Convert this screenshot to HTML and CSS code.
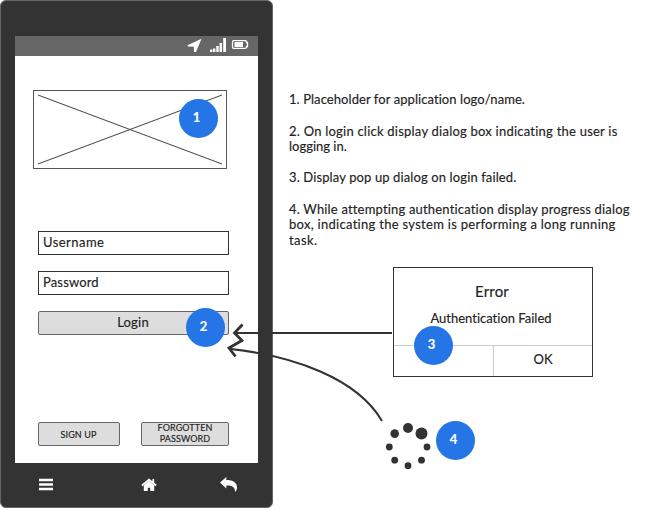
FILE: index.html
```html
<!DOCTYPE html>
<html lang="en">
<head>
<meta charset="utf-8">
<title>Login wireframe</title>
<link rel="stylesheet" href="styles.css">
</head>
<body>
<main class="board">
  <section class="phone">
    <div class="screen">
      <div class="status">
        <svg width="70" height="20" viewBox="0 0 70 20" fill="#fff">
          <path d="M18.500 2.800 13 16 11 16 10.800 10.800 5 10.400 4.500 9.200Z"/>
          <path d="M27 13.500h2.400v2.500h-2.400zM30 12.500h2.400v3.500h-2.400zM33.300 10h2.400v6h-2.400zM36.600 7h2.400v9h-2.400zM40.200 2h2.800v14h-2.800z"/>
          <path d="M50.500 4.700h11.700q1 0 1.300 1v.8h1v4h-1v.8q-.3 1-1.300 1h-11.700q-1 0-1-1v-5.600q0-1 1-1z" fill="none" stroke="#fff" stroke-width="1.300"/>
          <path d="M51.500 6h8.500v5h-8.500z"/>
        </svg>
      </div>
      <div class="logo">
        <svg width="192" height="77" viewBox="0 0 192 77" fill="none" stroke="#555" stroke-width="1.100">
          <path d="M4 4 188 73M4 73 188 4"/>
        </svg>
      </div>
      <div class="field"><span class="t-user">Username</span></div>
      <div class="field"><span class="t-pass">Password</span></div>
      <div class="button login"><span class="t-login">Login</span></div>
      <div class="links">
        <div class="button signup"><span>SIGN UP</span></div>
        <div class="button forgot"><span>FORGOTTEN</span><span>PASSWORD</span></div>
      </div>
    </div>
    <nav class="nav">
      <svg width="14" height="14" viewBox="0 0 14 14" fill="#fff"><path d="M0 .8h14v2.500h-14zM0 5.300h14v2.500h-14zM0 9.800h14v2.500h-14z"/></svg>
      <svg class="home" width="16" height="14" viewBox="0 0 16 14" fill="#fff"><path d="M8 2.800 13.200 7.300V13H9.200V9.800H6.800V13H2.800V7.300Z"/><path d="M.9 7.500 8 1.500 15.100 7.500M12.300 1V5" fill="none" stroke="#fff" stroke-width="1.700"/></svg>
      <svg width="18" height="16" viewBox="0 0 18 16" fill="#fff"><path d="M0 5.500 6.300 0V3C13 3 17 5.500 17 10.500 17 12.500 16.200 14 15 15 15.200 10.200 12.500 8.500 6.300 8.500V11.500Z"/></svg>
    </nav>
  </section>
  <section class="side">
    <div class="notes">
      <p><span class="n1">1. Placeholder for application logo/name.</span></p>
      <p><span class="n2">2. On login click display dialog box indicating the user is</span><br><span class="n3">logging in.</span></p>
      <p><span class="n4">3. Display pop up dialog on login failed.</span></p>
      <p><span class="n5">4. While attempting authentication display progress dialog</span><br><span class="n6">box, indicating the system is performing a long running</span><br><span class="n7">task.</span></p>
    </div>
    <div class="dialog">
      <div class="title"><span>Error</span></div>
      <div class="message"><span class="t-auth">Authentication Failed</span></div>
      <div class="actions"><div class="cell"></div><div class="cell ok"><span>OK</span></div></div>
    </div>
    <svg class="spinner" width="48" height="50" viewBox="0 0 48 50" fill="#333">
      <circle cx="23" cy="8" r="5"/><circle cx="36.500" cy="13.500" r="6"/><circle cx="9.700" cy="13.600" r="4.300"/><circle cx="4.300" cy="27" r="3.400"/><circle cx="42" cy="27" r="3.400"/><circle cx="9.700" cy="40.200" r="3.400"/><circle cx="36.500" cy="40.200" r="3.400"/><circle cx="23" cy="45.700" r="3.400"/>
    </svg>
  </section>
  <svg class="arrows" width="648" height="508" viewBox="0 0 648 508" fill="none" stroke="#333">
    <path stroke-width="2" d="M392 333H235M382 421C357 378 293 356 231 349"/>
    <path stroke-width="2.800" d="M242.500 324.500 234.500 333 243 341.500M241 341 229 348 235.500 356.500"/>
  </svg>
  <b class="badge b1">1</b>
  <b class="badge b2">2</b>
  <b class="badge b3">3</b>
  <b class="badge b4">4</b>
</main>
</body>
</html>
```
FILE: styles.css
```css
* { box-sizing: border-box; }
body { margin: 0; background: #fff; color: #222; font: 13px/15.6px Lato, "Liberation Sans", sans-serif; font-variant-ligatures: none; -webkit-text-stroke: .15px; }
svg { display: block; flex: none; }
span { white-space: nowrap; }
.board { position: relative; display: flex; width: 648px; height: 508px; overflow: hidden; }
.phone { width: 273px; height: 508px; padding: 35px 14px 0; background: #333; border: 1px solid #666; border-radius: 6px; }
.screen { height: 427px; background: #fff; }
.status { height: 20px; background: #666; display: flex; padding-left: 168px; }
.logo { width: 194px; height: 79px; margin: 34px 0 62px 18px; border: 1px solid #555; }
.field { width: 191px; height: 24px; margin: 0 0 16px 23px; padding: 3px 4px; border: 1px solid #333; }
.t-user { letter-spacing: .45px; }
.t-pass { letter-spacing: .15px; }
.t-login { letter-spacing: .2px; }
.button { display: flex; flex-direction: column; align-items: center; justify-content: center; height: 24px; background: #ddd; border: 1px solid #666; border-radius: 2px; }
.login { width: 191px; margin-left: 23px; padding-right: 1px; }
.links { display: flex; justify-content: space-between; width: 191px; margin: 87px 0 0 23px; font-size: 9px; line-height: 11px; letter-spacing: .1px; }
.signup { width: 82px; padding-right: 1px; }
.forgot { width: 88px; padding-bottom: 2px; }
.nav { display: flex; align-items: center; justify-content: space-between; height: 44px; padding: 0 20px 0 24px; }
.home { margin-left: 24px; }
.side { flex: 1; padding: 92px 0 0 16px; }
.notes { height: 175px; }
.notes p { margin: 0 0 15.6px; }
.notes p:first-child { margin-bottom: 16.2px; }
.notes p:nth-child(2) { margin-bottom: 15.2px; }
.notes p:nth-child(3) { margin-bottom: 16px; }
.n1 { letter-spacing: .07px; }
.n2 { letter-spacing: .23px; }
.n4 { letter-spacing: .12px; }
.n5 { letter-spacing: .18px; }
.n6 { letter-spacing: .29px; }
.n7 { letter-spacing: .4px; }
.dialog { width: 200px; height: 110px; margin-left: 104px; border: 1px solid #333; display: flex; flex-direction: column; text-align: center; }
.title { height: 43px; padding: 16px 2px 0 0; font-size: 15px; letter-spacing: .2px; }
.message { height: 34px; padding-right: 4px; }
.actions { flex: 1; display: flex; border-top: 1px solid #ccc; }
.cell { width: 99px; }
.ok { border-left: 1px solid #ccc; padding-top: 6px; }
.spinner { margin: 43px 0 0 96px; }
.arrows { position: absolute; left: 0; top: 0; }
.badge { position: absolute; width: 39px; height: 39px; padding: 11px 4px 0 0; border-radius: 50%; background: #2575e6; color: #fff; text-align: center; }
.b1 { left: 179px; top: 99px; }
.b2 { left: 186px; top: 308px; }
.b3 { left: 414px; top: 326px; }
.b4 { left: 436px; top: 421px; }
```
